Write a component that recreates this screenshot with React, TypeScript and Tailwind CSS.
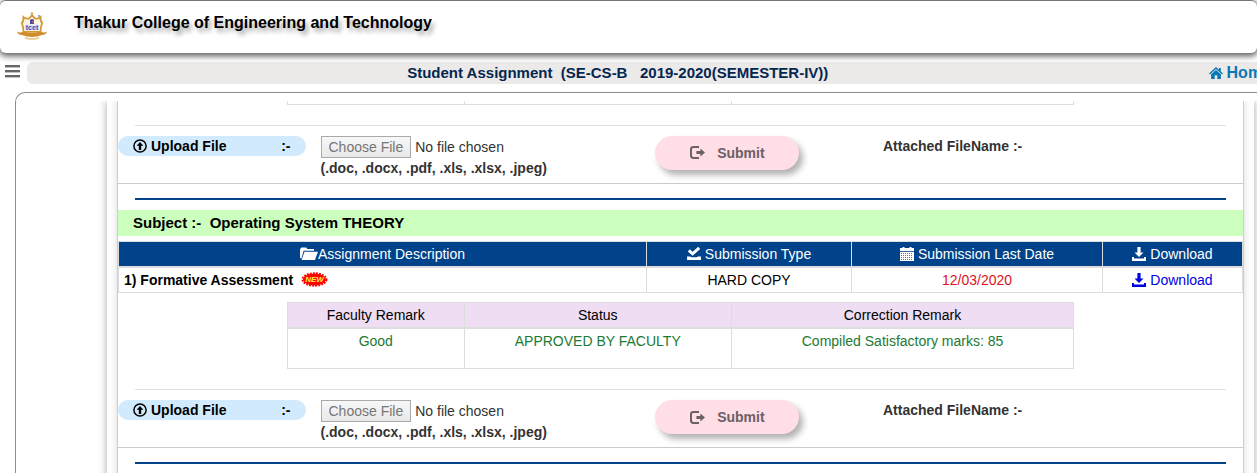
import type { ReactNode } from "react";

const svgBase = "inline-block shrink-0";

function MenuIcon() {
  return (
    <svg viewBox="0 0 15 13" className="block h-[13px] w-[15px]" fill="#666" aria-hidden="true">
      <rect width="15" height="2.400" />
      <rect y="5" width="15" height="2.400" />
      <rect y="10" width="15" height="2.400" />
    </svg>
  );
}

function HomeIcon() {
  return (
    <svg viewBox="0 0 14 12" className={`${svgBase} h-3 w-3.5`} fill="currentColor" aria-hidden="true">
      <path d="M7 0 0 6.4l.9 1L7 2l6.1 5.4.9-1-2.2-2V.9H9.9v1.8z" />
      <path d="M7 3 2.100 7.300V12h3.600V8.300h2.600V12h3.600V7.300z" />
    </svg>
  );
}

function FolderOpenIcon() {
  return (
    <svg viewBox="0 0 18 13" className={`${svgBase} h-[13px] w-[18px]`} fill="currentColor" aria-hidden="true">
      <path d="M0 11V2.2L1.4.6h4.8L7.4 2H14v1.8H3.6L1.4 11.6z" />
      <path d="M4.4 4.7H18L15 13H1.6z" />
    </svg>
  );
}

function SavedIcon() {
  return (
    <svg viewBox="0 0 14 13" className={`${svgBase} h-[13px] w-3.5`} aria-hidden="true">
      <path d="M0 9.500h3l1.500.8h5l1.500-.8h3V13H0z" fill="currentColor" />
      <path d="m1.800 3.400 3.800 3.400L12.200.9" fill="none" stroke="currentColor" strokeWidth="3" />
    </svg>
  );
}

function CalendarIcon() {
  return (
    <svg viewBox="0 0 14 14" className={`${svgBase} size-3.5`} aria-hidden="true">
      <path d="M0 1h2.500V0h2v1h5V0h2v1H14v13H0z" fill="currentColor" />
      <path d="M1 6.500h12M1 8.500h12M1 10.500h12M1 12.500h12" stroke="#01438a" strokeWidth=".7" strokeDasharray="1 1" />
      <path d="M0 4.500h14" stroke="#01438a" strokeWidth=".8" />
    </svg>
  );
}

function DownloadIcon() {
  return (
    <svg viewBox="0 0 14 14" className={`${svgBase} size-3.5`} fill="currentColor" aria-hidden="true">
      <path d="M5.400 0h3.200v5.400h2.900L7 10 2.500 5.400h2.900z" />
      <path d="M0 10h2v1.400h10V10h2v4H0z" />
    </svg>
  );
}

function UploadIcon() {
  return (
    <svg viewBox="0 0 14 14" className={`${svgBase} size-3.5`} aria-hidden="true">
      <circle cx="7" cy="7" r="6.1" fill="none" stroke="currentColor" strokeWidth="1.5" />
      <path d="m7 2.9 3.4 3.9H8.2v4.1H5.8V6.8H3.6z" fill="currentColor" />
    </svg>
  );
}

function LogOutIcon() {
  return (
    <svg viewBox="0 0 15 13" className={`${svgBase} h-[13px] w-[15px]`} aria-hidden="true">
      <path d="M9 1H3.4Q1 1 1 3.4v6.2Q1 12 3.400 12H9" fill="none" stroke="currentColor" strokeWidth="2" />
      <path d="M6.400 5.100h4V2.500L15 6.500l-4.600 4V7.900h-4z" fill="currentColor" />
    </svg>
  );
}

function NewBadge() {
  return (
    <svg viewBox="0 0 27 15" className="ml-2 inline-block h-[15px] w-[27px]" role="img" aria-label="New">
      <ellipse cx="13.5" cy="7.5" rx="11.500" ry="6" fill="#f00" />
      <ellipse cx="13.5" cy="7.5" rx="12" ry="6.2" fill="none" stroke="#f00" strokeWidth="2" strokeDasharray="1.8 1.2" />
      <text
        x="13.5"
        y="10.4"
        textAnchor="middle"
        fontSize="8"
        fontWeight="bold"
        fontStyle="italic"
        fontFamily="Liberation Sans, sans-serif"
        fill="#ffec3d"
      >
        NEW
      </text>
    </svg>
  );
}

function CollegeLogo() {
  return (
    <svg viewBox="0 0 30 28" className="h-7 w-[30px]" role="img" aria-label="College crest">
      <path
        d="M15 3.200 18 6.600q3.600.4 5.600-1.400-.4 4 1.600 6-2 4-1.600 8.600H6.400q.4-4.600-1.600-8.600 2-2 1.600-6Q8.400 7 12 6.600z"
        fill="#fff6e2"
        stroke="#d29a36"
        strokeWidth="1.800"
      />
      <path d="M15 0v3.600M13.600 1.600h2.800" stroke="#cfa95c" />
      <circle cx="22" cy="4" r="1" fill="#7d93c9" />
      <path d="M13 8q2-2 4 0v4h-4z" fill="#4d4b9c" />
      <path d="M15.400 9h1.600v2h-1.600z" fill="#e05a4a" />
      <path d="M8 12.600h14v5.600H8z" fill="#dbe2fa" />
      <text x="15" y="17.800" textAnchor="middle" fontSize="7" fontWeight="bold" fontFamily="Liberation Sans, sans-serif" fill="#3a4fb0">
        tcet
      </text>
      <path d="M0 19.500q3 1.800 6.500.2 8.500 2.600 17 0 3.500 1.600 6.500-.2-1 3.200-5 3.600-10 4-20 0-4-.4-5-3.600z" fill="#d08c2a" />
      <path d="M8 26q7 2 14 0" fill="none" stroke="#e8c07c" strokeWidth="1.400" />
    </svg>
  );
}

const mainHead = "border border-[#ddd] border-b-2 px-[5px] py-0.5 font-normal whitespace-nowrap";
const mainCell = "border border-[#ddd] px-[5px] py-0.5";
const remarkHead = "border border-b-2 border-[#ddd] py-0.5 font-normal";
const remarkCell = "border border-[#ddd] py-0.5";

function HeadLabel({ icon, children }: { icon: ReactNode; children: ReactNode }) {
  return (
    <span className="flex h-5 items-center justify-center gap-1">
      {icon}
      <span>{children}</span>
    </span>
  );
}

function UploadRow({ id }: { id: string }) {
  return (
    <form className="grid grid-cols-12 border-b border-[#ccc] pb-[5px]" onSubmit={(e) => e.preventDefault()}>
      <label
        htmlFor={id}
        className="col-span-2 flex h-5 items-center self-start rounded-full bg-[#d2eafd] px-[15px] font-bold text-black"
      >
        <UploadIcon />
        <span className="ml-1 flex-1">Upload File</span>
        <span>:-</span>
      </label>
      <div className="col-span-3 px-[15px] text-[#333]">
        <input
          id={id}
          type="file"
          disabled
          className="block h-[22px] w-full text-[#333] file:mr-1 file:h-[22px] file:rounded-none file:border file:border-solid file:border-[#aaa] file:bg-linear-to-b file:from-[#f8f8f8] file:to-[#e8e8e8] file:px-[7px] file:text-[#777]"
        />
        <p className="font-bold">(.doc, .docx, .pdf, .xls, .xlsx, .jpeg)</p>
      </div>
      <div className="col-span-3 text-center">
        <button
          type="submit"
          disabled
          className="inline-flex h-[34px] w-36 items-center justify-center gap-3 rounded-full bg-[#ffdee6] font-bold text-[#6b6065] shadow-[4px_5px_6px_rgba(0,0,0,0.3)]"
        >
          <LogOutIcon />
          Submit
        </button>
      </div>
      <p className="col-span-4 px-[15px] font-bold text-[#333]">Attached FileName :-</p>
    </form>
  );
}

function RemarkColumns() {
  return (
    <colgroup>
      <col className="w-[177px]" />
      <col className="w-[267px]" />
      <col />
    </colgroup>
  );
}

function Divider() {
  return <hr className="mx-[17px] mt-5 mb-2.5 border-t border-[#e0e0e0]" />;
}

function SubjectRule() {
  return <hr className="mx-[17px] mt-3.5 mb-2.5 border-t-2 border-[#01438a]" />;
}

export default function App() {
  return (
    <div className="flex h-screen flex-col overflow-hidden bg-white font-['Liberation_Sans',Arial,sans-serif] text-[14px] leading-5 text-black">
      <header className="relative flex h-[53px] shrink-0 items-start rounded-md border-t border-[#777] bg-white pl-[17px] shadow-[0_2px_6px_1px_rgba(0,0,0,0.65)]">
        <div className="mt-[11px]">
          <CollegeLogo />
        </div>
        <h1 className="mt-3 ml-[27px] text-[16px] font-bold [text-shadow:3px_4px_4px_rgba(0,0,0,0.35)]">
          Thakur College of Engineering and Technology
        </h1>
      </header>

      <div className="mt-[9px] flex shrink-0 items-start">
        <button type="button" aria-label="Menu" className="mt-[3px] mr-[7px] ml-[5px]">
          <MenuIcon />
        </button>
        <div className="-mr-3.5 flex h-[22px] flex-1 items-center rounded-md bg-[#ece9e9]">
          <h2 className="flex-1 text-center text-[15px] font-bold whitespace-pre text-[#05274f]">
            {"Student Assignment  (SE-CS-B   2019-2020(SEMESTER-IV))"}
          </h2>
          <a href="#home" className="flex items-center gap-1 text-[16px] font-bold text-[#0b78b5]">
            <HomeIcon />
            Home
          </a>
        </div>
      </div>

      <main className="mt-2 -mr-4 ml-[15px] flex min-h-0 flex-1 flex-col rounded-tl-[10px] border-t border-l border-[#8c8c8c] pt-2 pr-4">
        <div className="min-h-0 flex-1 overflow-hidden pr-[3px] pl-[91px]">
          <div className="bg-white px-2.5 shadow-[0_0_8px_rgba(0,0,0,0.35)]">
            <div className="border-x border-[#b5d5e8] pb-10 shadow-[0_0_8px_rgba(0,0,0,0.15)]">
              <table className="mx-auto w-[70%] table-fixed border-collapse">
                <RemarkColumns />
                <tbody>
                  <tr className="h-[3px]">
                    <td className="border border-t-0 border-[#ddd] p-0" />
                    <td className="border border-t-0 border-[#ddd] p-0" />
                    <td className="border border-t-0 border-[#ddd] p-0" />
                  </tr>
                </tbody>
              </table>
              <Divider />
              <UploadRow id="upload-previous" />
              <SubjectRule />

              <h3 className="mb-[5px] h-[26px] bg-[#ccffbd] pl-[15px] text-[15px] leading-[26px] font-bold whitespace-pre">
                {"Subject :-  Operating System THEORY"}
              </h3>

              <table className="w-full table-fixed border-collapse text-center">
                <colgroup>
                  <col />
                  <col className="w-[205px]" />
                  <col className="w-[251px]" />
                  <col className="w-[140px]" />
                </colgroup>
                <thead className="bg-[#01438a] text-white">
                  <tr>
                    <th className={mainHead}>
                      <span className="flex h-5 items-center justify-center">
                        <FolderOpenIcon />
                        Assignment Description
                      </span>
                    </th>
                    <th className={mainHead}>
                      <HeadLabel icon={<SavedIcon />}>Submission Type</HeadLabel>
                    </th>
                    <th className={mainHead}>
                      <HeadLabel icon={<CalendarIcon />}>Submission Last Date</HeadLabel>
                    </th>
                    <th className={mainHead}>
                      <HeadLabel icon={<DownloadIcon />}>Download</HeadLabel>
                    </th>
                  </tr>
                </thead>
                <tbody>
                  <tr>
                    <td className={`${mainCell} text-left font-bold`}>
                      <span className="flex h-5 items-center">
                        1) Formative Assessment
                        <NewBadge />
                      </span>
                    </td>
                    <td className={mainCell}>HARD COPY</td>
                    <td className={`${mainCell} text-[#e0101c]`}>12/03/2020</td>
                    <td className={mainCell}>
                      <a href="#download" className="flex h-5 items-center justify-center gap-1 text-[#0000e6]">
                        <DownloadIcon />
                        Download
                      </a>
                    </td>
                  </tr>
                </tbody>
              </table>

              <table className="mx-auto mt-[9px] w-[70%] table-fixed border-collapse text-center">
                <RemarkColumns />
                <thead className="bg-[#eeddf3]">
                  <tr>
                    <th className={remarkHead}>Faculty Remark</th>
                    <th className={remarkHead}>Status</th>
                    <th className={remarkHead}>Correction Remark</th>
                  </tr>
                </thead>
                <tbody className="text-[#1b7a34]">
                  <tr className="h-[41px] align-top">
                    <td className={remarkCell}>Good</td>
                    <td className={remarkCell}>APPROVED BY FACULTY</td>
                    <td className={remarkCell}>Compiled Satisfactory marks: 85</td>
                  </tr>
                </tbody>
              </table>
              <Divider />
              <UploadRow id="upload-operating-system" />
              <SubjectRule />
            </div>
          </div>
        </div>
      </main>
    </div>
  );
}
